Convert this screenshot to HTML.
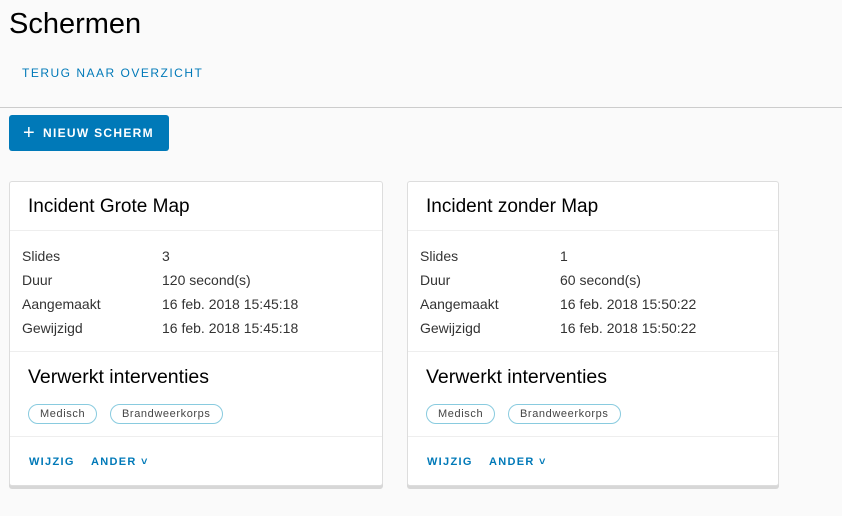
<!DOCTYPE html>
<html><head><style>
*{box-sizing:border-box;margin:0;padding:0}
body{width:842px;height:516px;background:#fafafa;font-family:"Liberation Sans",sans-serif;color:#000;position:relative;overflow:hidden}
h1{position:absolute;left:9px;top:8px;font-size:29px;font-weight:normal;color:#000}
.back{position:absolute;left:22px;top:66px;font-size:12px;letter-spacing:1.5px;color:#0079b8}
.hr{position:absolute;left:0;top:107px;width:842px;height:1px;background:#ccc}
.btn{position:absolute;left:9px;top:115px;width:160px;height:36px;background:#0079b8;border-radius:3px;color:#fff;font-size:12px;font-weight:bold;letter-spacing:1.3px;line-height:36px;padding-left:34px}
.btn span{position:absolute;left:14px;top:0;font-size:20px;font-weight:normal;letter-spacing:0}
.card{position:absolute;top:181px;height:305px;background:#fff;border:1px solid #ddd;border-radius:3px;box-shadow:0 3px 0 #d7d7d7}
.card .t{position:absolute;left:18px;top:14px;font-size:19px}
.d1{position:absolute;left:0;right:0;top:48px;height:1px;background:#eee}
.d2{position:absolute;left:0;right:0;top:169px;height:1px;background:#eee}
.d3{position:absolute;left:0;right:0;top:254px;height:1px;background:#eee}
.row{position:absolute;left:12px;font-size:14px;color:#333}
.row b{font-weight:normal;position:absolute;left:140px;white-space:nowrap}
.s{position:absolute;left:18px;top:184px;font-size:19.5px}
.tag{position:absolute;top:222px;height:20px;border:1px solid #89cbdf;border-radius:10px;font-size:11px;letter-spacing:.6px;color:#444;line-height:18px;padding:0 11px}
.a{position:absolute;top:274px;font-size:11px;font-weight:bold;letter-spacing:1.3px;color:#0079b8}
</style></head><body>
<h1>Schermen</h1>
<div class="back">TERUG NAAR OVERZICHT</div>
<div class="hr"></div>
<div class="btn"><span>+</span>NIEUW SCHERM</div>

<div class="card" style="left:9px;width:374px">
<div class="t">Incident Grote Map</div><div class="d1"></div>
<div class="row" style="top:66px">Slides<b>3</b></div>
<div class="row" style="top:90px">Duur<b>120 second(s)</b></div>
<div class="row" style="top:114px">Aangemaakt<b>16 feb. 2018 15:45:18</b></div>
<div class="row" style="top:138px">Gewijzigd<b>16 feb. 2018 15:45:18</b></div>
<div class="d2"></div>
<div class="s">Verwerkt interventies</div>
<div class="tag" style="left:18px">Medisch</div>
<div class="tag" style="left:100px">Brandweerkorps</div>
<div class="d3"></div>
<div class="a" style="left:19px">WIJZIG</div>
<div class="a" style="left:81px">ANDER ˅</div>
</div>

<div class="card" style="left:407px;width:372px">
<div class="t">Incident zonder Map</div><div class="d1"></div>
<div class="row" style="top:66px">Slides<b>1</b></div>
<div class="row" style="top:90px">Duur<b>60 second(s)</b></div>
<div class="row" style="top:114px">Aangemaakt<b>16 feb. 2018 15:50:22</b></div>
<div class="row" style="top:138px">Gewijzigd<b>16 feb. 2018 15:50:22</b></div>
<div class="d2"></div>
<div class="s">Verwerkt interventies</div>
<div class="tag" style="left:18px">Medisch</div>
<div class="tag" style="left:100px">Brandweerkorps</div>
<div class="d3"></div>
<div class="a" style="left:19px">WIJZIG</div>
<div class="a" style="left:81px">ANDER ˅</div>
</div>
</body></html>
